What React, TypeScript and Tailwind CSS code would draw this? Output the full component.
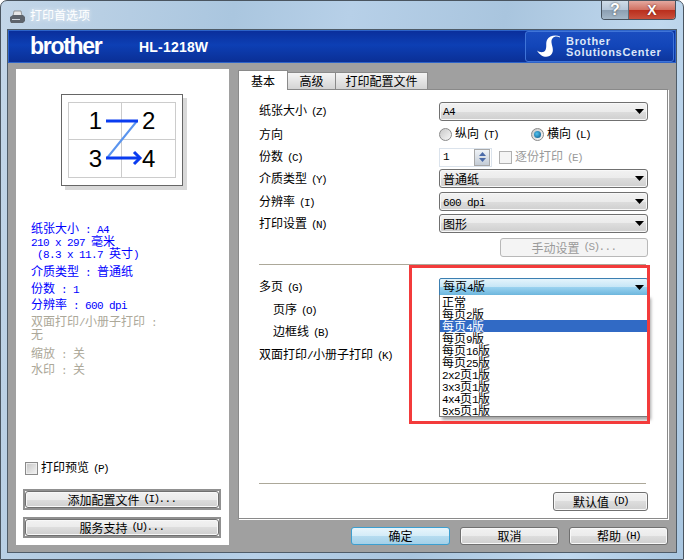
import React from "react";

// mixes 12px CJK with 6px wide latin, like the bitmap dialog font
const Mix = ({ text }: { text: string }) => (
  <>
    {text.split(/( \(.\)|[\x00-\x7f]+)/).map((part, i) => {
      if (/^ \(.\)$/.test(part)) {
        // accelerator key, drawn tight after the label
        return (
          <span key={i} className="ml-[4px] font-['Liberation_Mono',monospace] text-[11px] tracking-[-1.6px] whitespace-pre">
            {part.trim()}
          </span>
        );
      }
      return /^[\x00-\x7f]+$/.test(part) ? (
        <span key={i} className="font-['Liberation_Mono',monospace] text-[11px] tracking-[-0.6px] whitespace-pre">
          {part}
        </span>
      ) : (
        <span key={i}>{part}</span>
      );
    })}
  </>
);

const Arrow = () => (
  <svg width="9" height="5" viewBox="0 0 9 5" className="shrink-0">
    <path d="M0 0h9L4.5 5z" fill="#000" />
  </svg>
);

const Select = ({ value }: { value: string }) => (
  <div className="w-[209px] shrink-0 h-[19px] flex items-center justify-between pl-[3px] pr-[3px] border border-[#707070] rounded-[3px] bg-[linear-gradient(#f2f2f2_0%,#ebebeb_50%,#dddddd_50%,#cfcfcf_100%)] shadow-[inset_0_0_0_1px_#f8f8f8]">
    <span className="leading-none"><Mix text={value} /></span>
    <Arrow />
  </div>
);

const Btn = ({ label, className = "" }: { label: string; className?: string }) => (
  <div className={`flex items-center justify-center border border-[#707070] rounded-[3px] bg-[linear-gradient(#f2f2f2_0%,#ebebeb_50%,#dddddd_50%,#cfcfcf_100%)] shadow-[inset_0_0_0_1px_#f8f8f8] ${className}`}>
    <Mix text={label} />
  </div>
);

const Row = ({ h, label, children, indent }: { h: string; label: string; children?: React.ReactNode; indent?: boolean }) => (
  <div className={`flex items-center ${h}`}>
    <div className={`w-[180px] shrink-0 ${indent ? "pl-[14px]" : ""}`}>
      <Mix text={label} />
    </div>
    {children}
  </div>
);

const Radio = ({ on }: { on?: boolean }) => (
  <span className="w-[13px] h-[13px] rounded-full border border-[#8a8a8a] bg-[linear-gradient(135deg,#c8c8c8,#f8f8f8)] flex items-center justify-center shrink-0">
    {on && <span className="w-[7px] h-[7px] rounded-full bg-[radial-gradient(circle_at_40%_40%,#4fc3f0,#0b4f80)]" />}
  </span>
);

const options = ["正常", "每页2版", "每页4版", "每页9版", "每页16版", "每页25版", "2x2页1版", "3x3页1版", "4x4页1版", "5x5页1版"];

export default function App() {
  return (
    <div className="relative w-[684px] h-[560px] overflow-hidden flex flex-col rounded-t-[7px] border border-[#4a5560] bg-[linear-gradient(100deg,#c3d6e8_0%,#aac6df_30%,#b7d0e8_45%,#a9c5de_65%,#c0d8ee_85%,#a9c6e0_100%)] text-[12px] leading-none text-black font-['Noto_Sans_CJK_SC',sans-serif]">
      {/* title bar */}
      <div className="h-[28px] shrink-0 flex items-start pl-[8px] pr-[7px]">
        <svg width="17" height="14" viewBox="0 0 17 14" className="mt-[9px]">
          <path d="M5 1h7l1 5H4z" fill="#e8e8e8" stroke="#777" strokeWidth="0.7" />
          <path d="M1 7l3-2h10l2 2v4l-2 2H2l-1-2z" fill="#5e646c" />
          <rect x="3" y="9" width="8" height="1" fill="#cfd4da" />
        </svg>
        <span className="ml-[4px] mt-[7px] text-[12px] leading-[14px] text-white [text-shadow:0_0_4px_rgba(255,255,255,0.9)]">打印首选项</span>
        <div className="ml-auto flex h-[19px] border border-t-0 border-[#47525e] rounded-b-[4px] overflow-hidden">
          <div className="w-[27px] flex items-center justify-center bg-[linear-gradient(#cfdce8_0%,#b4c6d8_50%,#8b9eb1_50%,#a4b7c8_100%)] border-r border-[#5e6b78] text-white font-bold text-[16px] font-['Liberation_Sans',sans-serif] [text-shadow:0_0_2px_#333]">
            ?
          </div>
          <div className="w-[46px] flex items-center justify-center bg-[linear-gradient(#e4a89f_0%,#d06f60_50%,#b92d1c_50%,#c9503c_100%)] text-white font-bold text-[14px] font-['Liberation_Sans',sans-serif] [text-shadow:0_0_2px_#5a1008]">
            X
          </div>
        </div>
      </div>

      {/* client area */}
      <div className="mx-[6px] mb-[6px] flex-1 flex flex-col border border-[#4f5c68] bg-[#a0a0a0] min-h-0">
        {/* banner */}
        <div className="h-[33px] shrink-0 flex items-center border border-[#2d63c8] bg-[linear-gradient(#0a2f9c_0%,#0d3fb4_45%,#0a2f96_100%)] text-white font-['Liberation_Sans',sans-serif]">
          <span className="ml-[21px] w-[109px] text-[23px] font-bold tracking-[-1.3px] leading-none">brother</span>
          <span className="text-[14px] font-bold tracking-[0.2px]">HL-1218W</span>
          <div className="ml-auto mr-[1px] w-[149px] h-[31px] flex items-center border border-[#3f74d8] rounded-[3px] bg-[linear-gradient(#1a4dc0_0%,#1245b8_50%,#0d359c_100%)]">
            <svg width="26" height="24" viewBox="0 0 26 24" className="ml-[10px]">
              <path d="M24 2.500C19 0 15 3 15.500 7.500C16 11.500 18 14.500 16 18.500C13 23.500 5 23 1 15.500C3.500 17.500 8 18 9.500 15C11 12 9.500 8 11 5C13 0.500 20 -0.500 24 1.500z" fill="#fff" />
            </svg>
            <span className="ml-[4px] text-[11px] font-bold leading-[11px] tracking-[0.7px] text-[#dce6f8]">
              Brother
              <br />
              SolutionsCenter
            </span>
          </div>
        </div>

        {/* body */}
        <div className="flex-1 flex pl-[8px] pr-[8px] pt-[6px] pb-[7px] min-h-0">
          {/* left panel */}
          <div className="w-[213px] shrink-0 bg-white flex flex-col">
            <div className="relative ml-[45px] mt-[25px] w-[122px] h-[92px] border border-[#666] bg-white shadow-[4px_4px_0_#d8d8d8] px-[6px] py-[7px]">
              <div className="grid grid-cols-2 grid-rows-2 h-full border border-[#ccc] text-[24px] font-['Liberation_Sans',sans-serif]">
                <div className="flex items-center justify-end pr-[19px] border-r border-b border-[#ccc]">1</div>
                <div className="flex items-center pl-[20px] border-b border-[#ccc]">2</div>
                <div className="flex items-center justify-end pr-[19px] border-r border-[#ccc]">3</div>
                <div className="flex items-center pl-[20px]">4</div>
              </div>
              <svg width="122" height="92" viewBox="0 0 122 92" className="absolute left-[-1px] top-[-1px]">
                <path d="M46 64L76 27" stroke="#5a94ee" strokeWidth="2" fill="none" />
                <path d="M45 27h32" stroke="#0a3cf0" strokeWidth="3" fill="none" />
                <path d="M45 64h33" stroke="#0a3cf0" strokeWidth="3" fill="none" />
                <path d="M73 58l6 6-6 6" stroke="#0a3cf0" strokeWidth="3" fill="none" />
              </svg>
            </div>

            <div className="ml-[15px] mt-[36px] text-[#0000ff]">
              <div className="h-[12px]"><Mix text="纸张大小 : A4" /></div>
              <div className="h-[12px] mt-px"><Mix text="210 x 297 毫米" /></div>
              <div className="h-[12px]"><Mix text=" (8.3 x 11.7 英寸)" /></div>
              <div className="h-[12px] mt-[6px]"><Mix text="介质类型 : 普通纸" /></div>
              <div className="h-[12px] mt-[5px]"><Mix text="份数 : 1" /></div>
              <div className="h-[12px] mt-[4px]"><Mix text="分辨率 : 600 dpi" /></div>
              <div className="h-[12px] mt-[5px] text-[#aca899]"><Mix text="双面打印/小册子打印 :" /></div>
              <div className="h-[12px] mt-px text-[#aca899]">无</div>
              <div className="h-[12px] mt-[7px] text-[#aca899]"><Mix text="缩放 : 关" /></div>
              <div className="h-[12px] mt-[4px] text-[#aca899]"><Mix text="水印 : 关" /></div>
            </div>

            <div className="mt-auto ml-[9px] flex items-center">
              <span className="w-[13px] h-[13px] border border-[#8a8a8a] bg-[linear-gradient(135deg,#c4c4c4,#f4f4f4)] shadow-[inset_0_0_0_1px_#eee]" />
              <span className="ml-[3px]"><Mix text="打印预览 (P)" /></span>
            </div>
            <div className="mt-[14px] ml-[7px] mb-[7px] flex flex-col gap-[7px]">
              <div className="w-[198px] border-[2px] border-[#909090]"><Btn label="添加配置文件 (I)..." className="h-[17px] rounded-[2px]" /></div>
              <div className="w-[198px] border-[2px] border-[#909090]"><Btn label="服务支持 (U)..." className="h-[17px] rounded-[2px]" /></div>
            </div>
          </div>

          {/* right side */}
          <div className="ml-[9px] flex-1 flex flex-col min-w-0">
            <div className="h-[20px] flex items-end shrink-0">
              <div className="w-[50px] h-[20px] bg-white border border-b-0 border-[#8a8a8a] flex items-center justify-center relative z-10 -mb-[1px]">基本</div>
              <div className="w-[48px] h-[17px] border border-b-0 border-l-0 border-[#8a8a8a] bg-[linear-gradient(#f4f4f4,#d4d4d4)] flex items-center justify-center">高级</div>
              <div className="w-[92px] h-[17px] border border-b-0 border-l-0 border-[#8a8a8a] bg-[linear-gradient(#f4f4f4,#d4d4d4)] flex items-center justify-center">打印配置文件</div>
            </div>
            <div className="flex-1 bg-white border border-[#8a8a8a] flex flex-col pl-[20px] pr-[21px] pt-[11px] pb-[7px] shadow-[1px_1px_0_#fff] min-h-0">
              <Row h="h-[20px]" label="纸张大小 (Z)"><Select value="A4" /></Row>
              <Row h="h-[26px]" label="方向">
                <Radio />
                <span className="ml-[3px] w-[76px]"><Mix text="纵向 (T)" /></span>
                <Radio on />
                <span className="ml-[3px]"><Mix text="横向 (L)" /></span>
              </Row>
              <Row h="h-[20px]" label="份数 (C)">
                <div className="w-[53px] shrink-0 h-[19px] flex items-center justify-between border border-[#dbe3ec] pl-[3px] pr-[1px]">
                  <span className="font-['Liberation_Mono',monospace] text-[11px]">1</span>
                  <div className="w-[16px] h-[17px] border border-[#a8a8a8] bg-[linear-gradient(#eef2f6,#c4ccd6)] flex flex-col items-center justify-center gap-[2px]">
                    <svg width="7" height="4" viewBox="0 0 7 4"><path d="M0 4L3.500 0 7 4z" fill="#4a6aa8" /></svg>
                    <svg width="7" height="4" viewBox="0 0 7 4"><path d="M0 0h7L3.500 4z" fill="#4a6aa8" /></svg>
                  </div>
                </div>
                <span className="ml-[7px] w-[13px] h-[13px] shrink-0 border border-[#b0b0b0] bg-[#f4f4f4]" />
                <span className="ml-[3px] text-[#9a9a9a] whitespace-nowrap"><Mix text="逐份打印 (E)" /></span>
              </Row>
              <Row h="h-[23px]" label="介质类型 (Y)"><Select value="普通纸" /></Row>
              <Row h="h-[23px]" label="分辨率 (I)"><Select value="600 dpi" /></Row>
              <Row h="h-[21px]" label="打印设置 (N)"><Select value="图形" /></Row>
              <div className="flex justify-end mt-[4px] -mr-[2px]">
                <div className="w-[148px] h-[19px] flex items-center justify-center border border-[#b8b8b8] rounded-[3px] bg-[#f4f4f4] text-[#9a9a9a]"><Mix text="手动设置 (S)..." /></div>
              </div>
              <div className="h-px bg-[#aca899] mt-[7px]" />

              <div className="mt-[12px] flex flex-col">
                <Row h="h-[20px]" label="多页 (G)">
                  <div className="w-[209px] shrink-0 h-[19px] flex items-center justify-between px-[3px] border border-[#3c7fb1] rounded-[2px] bg-[linear-gradient(#e4f4fc_0%,#c4e5f6_50%,#98d1ef_50%,#68b3db_100%)]">
                    <span><Mix text="每页4版" /></span>
                    <Arrow />
                  </div>
                </Row>
                <div className="mt-[3px]"><Row h="h-[20px]" indent label="页序 (O)" /></div>
                <div className="mt-[2px]"><Row h="h-[20px]" indent label="边框线 (B)" /></div>
                <div className="mt-[3px]"><Row h="h-[20px]" label="双面打印/小册子打印 (K)" /></div>
              </div>

              <div className="mt-auto h-px bg-[#aca899]" />
              <div className="mt-[8px] flex justify-end -mr-[2px]">
                <Btn label="默认值 (D)" className="w-[95px] h-[19px]" />
              </div>
            </div>
            <div className="h-[26px] shrink-0 flex items-end justify-end gap-[10px]">
              <div className="w-[99px] h-[18px] flex items-center justify-center border border-[#3c9fd0] rounded-[3px] bg-[linear-gradient(#e8f5fc_0%,#d4ecf8_50%,#b6dcf0_50%,#a4d0e8_100%)]">确定</div>
              <Btn label="取消" className="w-[99px] h-[18px]" />
              <Btn label="帮助 (H)" className="w-[99px] h-[18px]" />
            </div>
          </div>
        </div>
      </div>

      {/* open dropdown list */}
      <div className="absolute left-[438px] top-[294px] w-[209px] h-[122px] bg-white border border-[#7a7a7a] border-t-0 shadow-[3px_3px_3px_rgba(0,0,0,0.35)] pt-px">
        {options.map((o, i) => (
          <div key={o} className={`h-[12px] leading-[12px] pl-[2px] ${i === 2 ? "bg-[#316ac5] text-white" : ""}`}>
            <Mix text={o} />
          </div>
        ))}
      </div>
      {/* red highlight drawn over the screenshot */}
      <div className="absolute left-[408px] top-[264px] w-[241px] h-[159px] border-[3px] border-[#f33b3b]" />
    </div>
  );
}
